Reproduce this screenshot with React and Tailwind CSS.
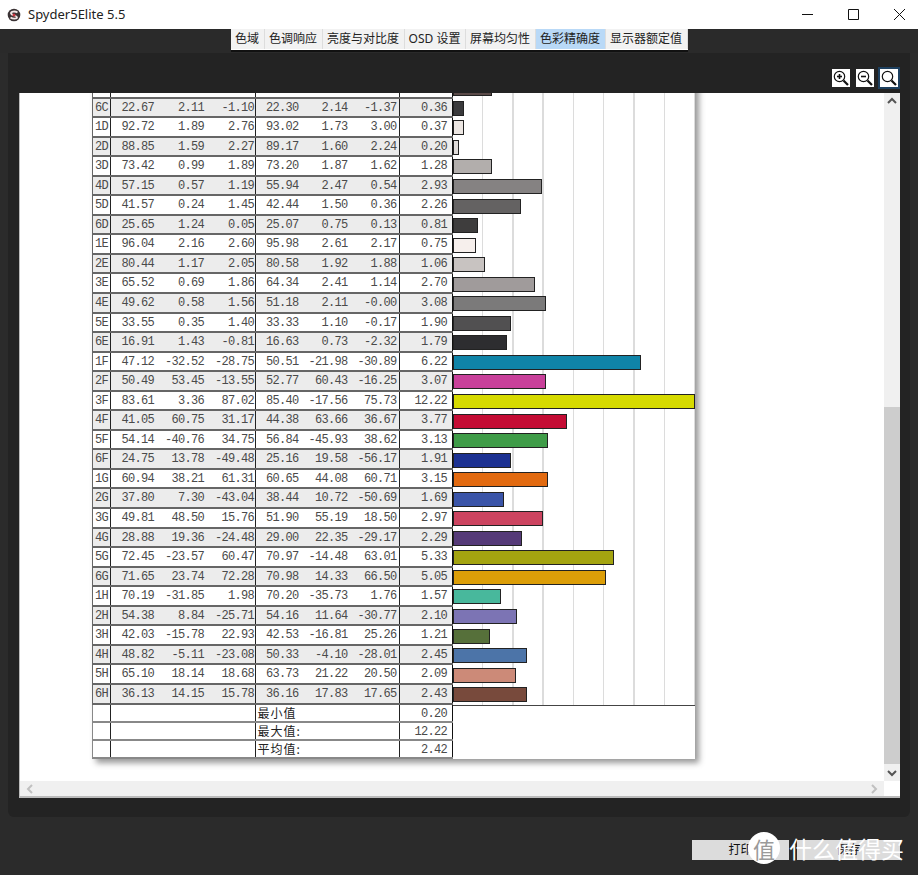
import React from "react";

const tabs = [
  { label: "色域", w: "w-[34px]" },
  { label: "色调响应", w: "w-[58px]" },
  { label: "亮度与对比度", w: "w-[82px]" },
  { label: "OSD 设置", w: "w-[61px]" },
  { label: "屏幕均匀性", w: "w-[70px]" },
  { label: "色彩精确度", w: "w-[70px]", active: true },
  { label: "显示器额定值", w: "w-[82px]" },
];

// id, L a b (ref), L a b (measured), dE, bar colour
const rows = [
  ["5C", "38.25", "4.66", "3.87", "38.05", "3.04", "3.85", "1.28", "#5a4a48"],
  ["6C", "22.67", "2.11", "-1.10", "22.30", "2.14", "-1.37", "0.36", "#3a3a3c"],
  ["1D", "92.72", "1.89", "2.76", "93.02", "1.73", "3.00", "0.37", "#ece6e2"],
  ["2D", "88.85", "1.59", "2.27", "89.17", "1.60", "2.24", "0.20", "#e0dcda"],
  ["3D", "73.42", "0.99", "1.89", "73.20", "1.87", "1.62", "1.28", "#b2aeac"],
  ["4D", "57.15", "0.57", "1.19", "55.94", "2.47", "0.54", "2.93", "#858282"],
  ["5D", "41.57", "0.24", "1.45", "42.44", "1.50", "0.36", "2.26", "#646262"],
  ["6D", "25.65", "1.24", "0.05", "25.07", "0.75", "0.13", "0.81", "#3e3d3d"],
  ["1E", "96.04", "2.16", "2.60", "95.98", "2.61", "2.17", "0.75", "#f6efec"],
  ["2E", "80.44", "1.17", "2.05", "80.58", "1.92", "1.88", "1.06", "#c8c3c1"],
  ["3E", "65.52", "0.69", "1.86", "64.34", "2.41", "1.14", "2.70", "#a09b9b"],
  ["4E", "49.62", "0.58", "1.56", "51.18", "2.11", "-0.00", "3.08", "#7b7a7a"],
  ["5E", "33.55", "0.35", "1.40", "33.33", "1.10", "-0.17", "1.90", "#515051"],
  ["6E", "16.91", "1.43", "-0.81", "16.63", "0.73", "-2.32", "1.79", "#2d2d30"],
  ["1F", "47.12", "-32.52", "-28.75", "50.51", "-21.98", "-30.89", "6.22", "#0f84a8"],
  ["2F", "50.49", "53.45", "-13.55", "52.77", "60.43", "-16.25", "3.07", "#c8409a"],
  ["3F", "83.61", "3.36", "87.02", "85.40", "-17.56", "75.73", "12.22", "#d6da00"],
  ["4F", "41.05", "60.75", "31.17", "44.38", "63.66", "36.67", "3.77", "#c40c34"],
  ["5F", "54.14", "-40.76", "34.75", "56.84", "-45.93", "38.62", "3.13", "#3f9c48"],
  ["6F", "24.75", "13.78", "-49.48", "25.16", "19.58", "-56.17", "1.91", "#1c3192"],
  ["1G", "60.94", "38.21", "61.31", "60.65", "44.08", "60.71", "3.15", "#e26a10"],
  ["2G", "37.80", "7.30", "-43.04", "38.44", "10.72", "-50.69", "1.69", "#3a54a8"],
  ["3G", "49.81", "48.50", "15.76", "51.90", "55.19", "18.50", "2.97", "#cc4460"],
  ["4G", "28.88", "19.36", "-24.48", "29.00", "22.35", "-29.17", "2.29", "#553a78"],
  ["5G", "72.45", "-23.57", "60.47", "70.97", "-14.48", "63.01", "5.33", "#a4a410"],
  ["6G", "71.65", "23.74", "72.28", "70.98", "14.33", "66.50", "5.05", "#dc9e08"],
  ["1H", "70.19", "-31.85", "1.98", "70.20", "-35.73", "1.76", "1.57", "#48b89c"],
  ["2H", "54.38", "8.84", "-25.71", "54.16", "11.64", "-30.77", "2.10", "#7c74b4"],
  ["3H", "42.03", "-15.78", "22.93", "42.53", "-16.81", "25.26", "1.21", "#56703a"],
  ["4H", "48.82", "-5.11", "-23.08", "50.33", "-4.10", "-28.01", "2.45", "#4c74a8"],
  ["5H", "65.10", "18.14", "18.68", "63.73", "21.22", "20.50", "2.09", "#cc8a78"],
  ["6H", "36.13", "14.15", "15.78", "36.16", "17.83", "17.65", "2.43", "#784a3c"],
];

const summary = [
  ["最小值", "0.20"],
  ["最大值:", "12.22"],
  ["平均值:", "2.42"],
];

function Magnifier({ mark }) {
  return (
    <svg viewBox="0 0 18 18" className="w-[18px] h-[18px]" fill="none" stroke="#111">
      <circle cx="7.5" cy="7.5" r="5.2" strokeWidth="1.2" />
      <path d="M11.5 11.5L16 16" strokeWidth="2.2" />
      {mark !== "none" && <path d="M5 7.5h5" strokeWidth="1.6" />}
      {mark === "plus" && <path d="M7.5 5v5" strokeWidth="1.6" />}
    </svg>
  );
}

function Chevron({ d }) {
  return (
    <svg viewBox="0 0 10 10" className="w-[10px] h-[10px]" fill="none" stroke="currentColor" strokeWidth="2">
      <path d={d} />
    </svg>
  );
}

function DataRow({ row, index }) {
  const even = index % 2 === 1;
  const barWidth = Math.min(Number(row[7]) * 30.3, 242);
  return (
    <div className="flex h-[19.55px]">
      <div
        className={`flex w-[361px] shrink-0 border-b-2 border-l border-[#666] text-[#4a4a4a] ${
          even ? "bg-[#ececec]" : "bg-white"
        }`}
      >
        <div className="w-[18px] pl-[2px] border-r border-[#222]">{row[0]}</div>
        <div className="w-[145px] flex border-r border-[#222]">
          <span className="w-[43px] text-right">{row[1]}</span>
          <span className="w-[50px] text-right">{row[2]}</span>
          <span className="w-[50px] text-right">{row[3]}</span>
        </div>
        <div className="w-[145px] flex border-r border-[#222]">
          <span className="w-[43px] text-right">{row[4]}</span>
          <span className="w-[49px] text-right">{row[5]}</span>
          <span className="w-[49px] text-right">{row[6]}</span>
        </div>
        <div className="w-[53px] pr-[5px] text-right border-r border-[#111]">{row[7]}</div>
      </div>
      <div className="w-[242px] flex items-center bg-[repeating-linear-gradient(to_right,transparent_0,transparent_28.8px,#dcdcdc_28.8px,#dcdcdc_30.3px)]">
        <div
          className="h-[15px] border border-[#222]"
          style={{ width: barWidth, backgroundColor: row[8] }}
        />
      </div>
    </div>
  );
}

function SummaryRow({ label, value, first }) {
  return (
    <div className="flex h-[18px]">
      <div className="flex w-[361px] shrink-0 border-b-2 border-l border-[#888] text-[#4a4a4a] bg-white">
        <div className="w-[18px] border-r border-[#222]" />
        <div className="w-[145px] border-r border-[#222]" />
        <div className="w-[145px] pl-[2px] border-r border-[#222] text-[#222] tracking-[1px] font-['Noto_Sans_CJK_SC',sans-serif] text-[12px] leading-[16px]">
          {label}
        </div>
        <div className="w-[53px] pr-[5px] text-right border-r border-[#111]">{value}</div>
      </div>
      <div className={first ? "w-[242px] border-t border-[#444]" : "w-[242px]"} />
    </div>
  );
}

export default function App() {
  return (
    <div className="relative w-[918px] h-[875px] overflow-hidden bg-[#2b2b2b] font-['Noto_Sans','Noto_Sans_CJK_SC',sans-serif]">
      {/* Title bar */}
      <header className="h-[29px] bg-white flex items-center justify-between">
        <div className="flex items-center pl-[7px] gap-[7px]">
          <svg viewBox="0 0 14 14" className="w-[14px] h-[14px]">
            <circle cx="7" cy="7" r="6.3" fill="#3a3234" />
            <path d="M10.5 4.5C8 2.8 3.5 3.5 4 5.5S10 7.5 10 9.2 6 11.2 3.5 9.5" fill="none" stroke="#f2e6e6" strokeWidth="1.8" />
            <circle cx="7" cy="7" r="1.5" fill="#c9343f" />
          </svg>
          <span className="text-[13px] text-[#222]">Spyder5Elite 5.5</span>
        </div>
        <div className="flex items-center pr-[13px] gap-[35px] text-[#111]">
          <svg viewBox="0 0 11 11" className="w-[11px] h-[11px]" stroke="currentColor"><path d="M0 5.5h11" /></svg>
          <svg viewBox="0 0 11 11" className="w-[11px] h-[11px]" fill="none" stroke="currentColor"><path d="M.5.5h10v10H.5z" /></svg>
          <svg viewBox="0 0 11 11" className="w-[11px] h-[11px]" stroke="currentColor"><path d="M0 0l11 11M11 0L0 11" /></svg>
        </div>
      </header>

      {/* Tabs */}
      <nav className="flex justify-center h-[24px] pr-[1px] bg-[#2a2a2a]">
        <div className="flex h-[21px] ml-[1px] border-b border-white shadow-[0_2px_0_#111]">
          {tabs.map((tab) => (
            <div
              key={tab.label}
              className={`${tab.w} flex items-center justify-center text-[12px] text-[#222] border-r border-[#ddd] ${
                tab.active ? "bg-[#b9d9f7]" : "bg-[#f2f2f2]"
              }`}
            >
              {tab.label}
            </div>
          ))}
        </div>
      </nav>

      {/* Main panel */}
      <main className="ml-[8px] mr-[8px] h-[764px] bg-[#232323] rounded-b-md pl-[11px] pr-[10px] flex flex-col">
        <div className="h-[40px] flex justify-end items-end gap-[6px] pr-[1px] pb-[6px]">
          <div className="bg-white"><Magnifier mark="plus" /></div>
          <div className="bg-white"><Magnifier mark="minus" /></div>
          <div className="bg-white ring-2 ring-[#1d3f5e] mr-[1px]"><Magnifier mark="none" /></div>
        </div>

        <div className="h-[705px] bg-white border-b-2 border-l border-[#bbb] flex flex-col overflow-hidden">
          <div className="flex flex-1 min-h-0">
            <div className="flex-1 overflow-hidden pl-[72px]">
              <div className="w-[603px] -mt-[14px] font-['Liberation_Mono',monospace] text-[12px] tracking-[-0.7px] leading-[19px] shadow-[4px_4px_6px_#999]">
                {rows.map((row, i) => (
                  <DataRow key={row[0]} row={row} index={i} />
                ))}
                {summary.map(([label, value], i) => (
                  <SummaryRow key={label} label={label} value={value} first={i === 0} />
                ))}
              </div>
            </div>
            {/* Vertical scrollbar */}
            <div className="w-[16px] bg-[#f0f0f0] flex flex-col items-center text-[#555]">
              <div className="h-[16px] flex items-center justify-center"><Chevron d="M1 7l4-4 4 4" /></div>
              <div className="flex-1 flex flex-col justify-end">
                <div className="w-[16px] h-[357px] bg-[#cdcdcd]" />
              </div>
              <div className="h-[17px] flex items-center justify-center"><Chevron d="M1 3l4 4 4-4" /></div>
            </div>
          </div>
          {/* Horizontal scrollbar */}
          <div className="h-[15px] flex">
            <div className="flex-1 bg-[#f0f0f0] flex items-center justify-between px-[5px] text-[#c0c0c0]">
              <Chevron d="M7 1L3 5l4 4" />
              <Chevron d="M3 1l4 4-4 4" />
            </div>
            <div className="w-[16px] bg-white" />
          </div>
        </div>
      </main>

      {/* Bottom buttons */}
      <footer className="flex justify-end gap-[8px] pt-[23px] pr-[18px] text-[12px] text-[#111]">
        <div className="w-[97px] h-[20px] bg-[#dcdcdc] flex items-center justify-center">打印</div>
        <div className="w-[103px] h-[20px] bg-[#dcdcdc] flex items-center justify-center">保存</div>
      </footer>

      {/* Watermark */}
      <div className="absolute left-[748px] top-[832px] flex items-center gap-[9px] font-['Noto_Sans_CJK_SC',sans-serif]">
        <div className="w-[32px] h-[32px] rounded-full bg-white flex items-center justify-center text-[22px] leading-none text-[#9a9a9a]">
          值
        </div>
        <span className="text-[23px] leading-none text-white whitespace-nowrap">什么值得买</span>
      </div>
    </div>
  );
}
